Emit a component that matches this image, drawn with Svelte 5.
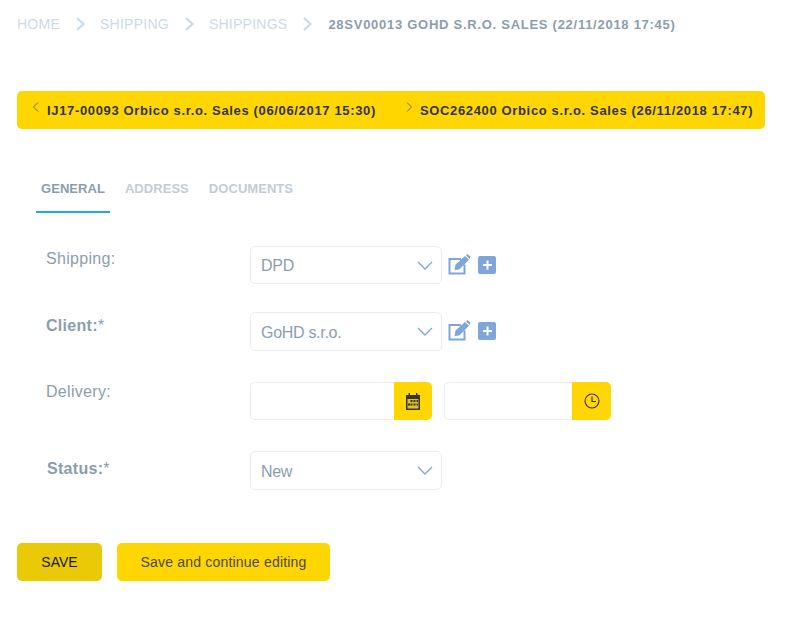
<script>
	const crumbs = ['HOME', 'SHIPPING', 'SHIPPINGS'];
	const tabs = ['GENERAL', 'ADDRESS', 'DOCUMENTS'];
</script>

{#snippet chevron()}
	<svg class="chevron" width="16" height="14" viewBox="0 0 16 14" fill="none">
		<path d="M3 1 9.500 7 3 13" />
	</svg>
{/snippet}

{#snippet caret()}
	<svg class="caret" width="16" height="9" viewBox="0 0 16 9" fill="none">
		<path d="M1 1 8 8 15 1" />
	</svg>
{/snippet}

{#snippet actions()}
	<div class="actions">
		<svg width="22" height="20" viewBox="0 0 22 20">
			<path class="box" d="M13 4H1.500v14.500h15V9.500" fill="none" />
			<path class="pen" d="M7.500 9.500 17 1 21 4.800 11.500 14.300 6.500 15.300ZM18 .4 19.500-1 22.400 1.600 21.800 4Z" />
		</svg>
		<span class="plus"></span>
	</div>
{/snippet}

<div class="page">
	<nav class="crumbs">
		{#each crumbs as crumb}
			<span>{crumb}</span>
			{@render chevron()}
		{/each}
		<strong>28SV00013 GOHD S.R.O. SALES (22/11/2018 17:45)</strong>
	</nav>

	<div class="pager">
		<a href="#prev" class="prev"><svg width="8" height="10" viewBox="0 0 8 10" fill="none"><path d="M6 .5 1.500 5 6 9.500" /></svg>IJ17-00093 Orbico s.r.o. Sales (06/06/2017 15:30)</a>
		<a href="#next" class="next"><svg width="8" height="10" viewBox="0 0 8 10" fill="none"><path d="M2 .5 6.500 5 2 9.500" /></svg>SOC262400 Orbico s.r.o. Sales (26/11/2018 17:47)</a>
	</div>

	<div class="tabs">
		{#each tabs as tab, i}
			<span class="tab" class:active={i === 0}>{tab}</span>
		{/each}
	</div>

	<form class="form">
		<div class="row shipping">
			<span class="label">Shipping:</span>
			<div class="select"><span class="value">DPD</span>{@render caret()}</div>
			{@render actions()}
		</div>
		<div class="row client">
			<span class="label bold">Client:<i>*</i></span>
			<div class="select"><span class="value">GoHD s.r.o.</span>{@render caret()}</div>
			{@render actions()}
		</div>
		<div class="row delivery">
			<span class="label">Delivery:</span>
			<div class="picker date">
				<div class="blank"></div>
				<div class="addon">
					<svg width="16" height="18" viewBox="0 0 16 18">
						<path class="cal" d="M1 3h2.500V1h1.500v2h6V1h1.500v2H15v15H1Z" />
						<rect class="face" x="2.500" y="7" width="11" height="9.500" />
						<g class="dots">
							<rect x="5.500" y="8" width="2" height="2" /><rect x="8.500" y="8" width="2" height="2" /><rect x="11.500" y="8" width="1.500" height="2" />
							<rect x="3" y="11.500" width="2" height="2" /><rect x="5.500" y="11.500" width="2" height="2" /><rect x="8.500" y="11.500" width="2" height="2" /><rect x="11.500" y="11.500" width="1.500" height="2" />
						</g>
					</svg>
				</div>
			</div>
			<div class="picker time">
				<div class="blank"></div>
				<div class="addon">
					<svg width="16" height="16" viewBox="0 0 16 16" fill="none">
						<circle cx="8" cy="8" r="7" />
						<path d="M8 3.500V8.500H12" />
					</svg>
				</div>
			</div>
		</div>
		<div class="row status">
			<span class="label bold">Status:<i>*</i></span>
			<div class="select"><span class="value">New</span>{@render caret()}</div>
		</div>
	</form>

	<div class="buttons">
		<button type="button" class="save">SAVE</button>
		<button type="button" class="continue">Save and continue editing</button>
	</div>
</div>

<style>
	:global(body) {
		background: #fff;
	}

	.page {
		width: 803px;
		height: 622px;
		box-sizing: border-box;
		padding: 16px 38px 0 17px;
		font-family: 'Liberation Sans', Arial, sans-serif;
		overflow: hidden;
	}

	.crumbs {
		display: flex;
		align-items: center;
		height: 16px;
		font-size: 14px;
		letter-spacing: 0.25px;
		color: #c9dbe9;
		white-space: nowrap;
	}

	.chevron {
		margin: 0 10px 0 14px;
	}

	.chevron path {
		stroke: #c9dbe9;
		stroke-width: 2.200;
	}

	.crumbs strong {
		margin-left: 1px;
		font-size: 13px;
		letter-spacing: 0.73px;
		color: #8b9eae;
	}

	.pager {
		display: flex;
		align-items: center;
		height: 38px;
		margin-top: 59px;
		padding-left: 15px;
		background: #ffd600;
		border-radius: 5px;
		font-size: 13px;
		font-weight: bold;
		letter-spacing: 0.65px;
		color: #33343f;
		white-space: nowrap;
	}

	.pager a {
		display: flex;
		align-items: center;
		color: inherit;
		text-decoration: none;
	}

	.pager svg {
		margin: -6px 7px 0 0;
	}

	.pager path {
		stroke: #6a6a3a;
		stroke-width: 1;
	}

	.next {
		margin-left: 29px;
	}

	.tabs {
		display: flex;
		margin: 44px 0 0 19px;
		font-size: 13px;
		font-weight: bold;
		letter-spacing: 0.05px;
	}

	.tab {
		height: 40px;
		padding: 8px 5px 0;
		box-sizing: border-box;
		color: #c3ccd6;
		margin-right: 10px;
	}

	.tab.active {
		color: #8b9eae;
		border-bottom: 2px solid #1ba9f0;
	}

	.form {
		margin-top: 33px;
	}

	.row {
		display: flex;
		align-items: flex-start;
		font-size: 16px;
		color: #8b9eae;
		padding-left: 29px;
	}

	.label {
		width: 204px;
		line-height: 20px;
		letter-spacing: 0.3px;
	}

	.bold {
		font-weight: bold;
	}

	.bold i {
		font-style: normal;
		font-weight: normal;
	}

	.shipping .label {
		padding-top: 3px;
	}

	.client {
		margin-top: 28px;
	}

	.client .label {
		padding-top: 4px;
	}

	.delivery {
		margin-top: 31px;
	}

	.status {
		margin-top: 31px;
	}

	.status .label {
		padding: 8px 0 0 1px;
		width: 203px;
	}

	.select {
		display: flex;
		align-items: center;
		justify-content: space-between;
		width: 192px;
		height: 38px;
		box-sizing: border-box;
		padding: 0 8px 0 10px;
		border: 1px solid #ebedf0;
		border-radius: 5px;
		letter-spacing: -0.3px;
		color: #8b9eae;
	}

	.value {
		padding-top: 2px;
	}

	.client .select,
	.status .select {
		height: 39px;
	}

	.caret path {
		stroke: #7fa6d8;
		stroke-width: 1.300;
	}

	.actions {
		display: flex;
		align-items: center;
		gap: 8px;
		height: 38px;
		margin-left: 6px;
	}

	.actions svg {
		overflow: visible;
	}

	.box {
		stroke: #7fa6d8;
		stroke-width: 2;
	}

	.pen {
		fill: #7fa6d8;
	}

	.plus {
		position: relative;
		width: 18px;
		height: 18px;
		background: #7fa6d8;
		border-radius: 2px;
	}

	.plus::before,
	.plus::after {
		content: '';
		position: absolute;
		left: 4.500px;
		top: 8px;
		width: 9px;
		height: 2px;
		background: #fff;
	}

	.plus::after {
		transform: rotate(90deg);
	}

	.picker {
		display: flex;
		height: 38px;
	}

	.blank {
		flex: 1;
		box-sizing: border-box;
		border: 1px solid #ebedf0;
		border-right: 0;
		border-radius: 5px 0 0 5px;
	}

	.date {
		width: 182px;
	}

	.time {
		width: 167px;
		margin-left: 12px;
	}

	.addon {
		display: flex;
		align-items: center;
		justify-content: center;
		width: 38px;
		background: #ffd600;
		border-radius: 0 5px 5px 0;
	}

	.time .addon {
		width: 39px;
	}

	.cal {
		fill: #33343f;
	}

	.face {
		fill: #e6c210;
	}

	.dots rect {
		fill: #33343f;
	}

	.time circle,
	.time path {
		stroke: #33343f;
		stroke-width: 1.100;
	}

	.buttons {
		display: flex;
		gap: 15px;
		margin-top: 53px;
	}

	button {
		height: 38px;
		border: 0;
		border-radius: 5px;
		font-family: inherit;
		font-size: 14px;
		padding: 0;
	}

	.save {
		width: 85px;
		background: #eac907;
		color: #1a1a1a;
	}

	.continue {
		width: 213px;
		background: #ffd600;
		color: #4a4a3c;
		letter-spacing: 0.2px;
	}
</style>
